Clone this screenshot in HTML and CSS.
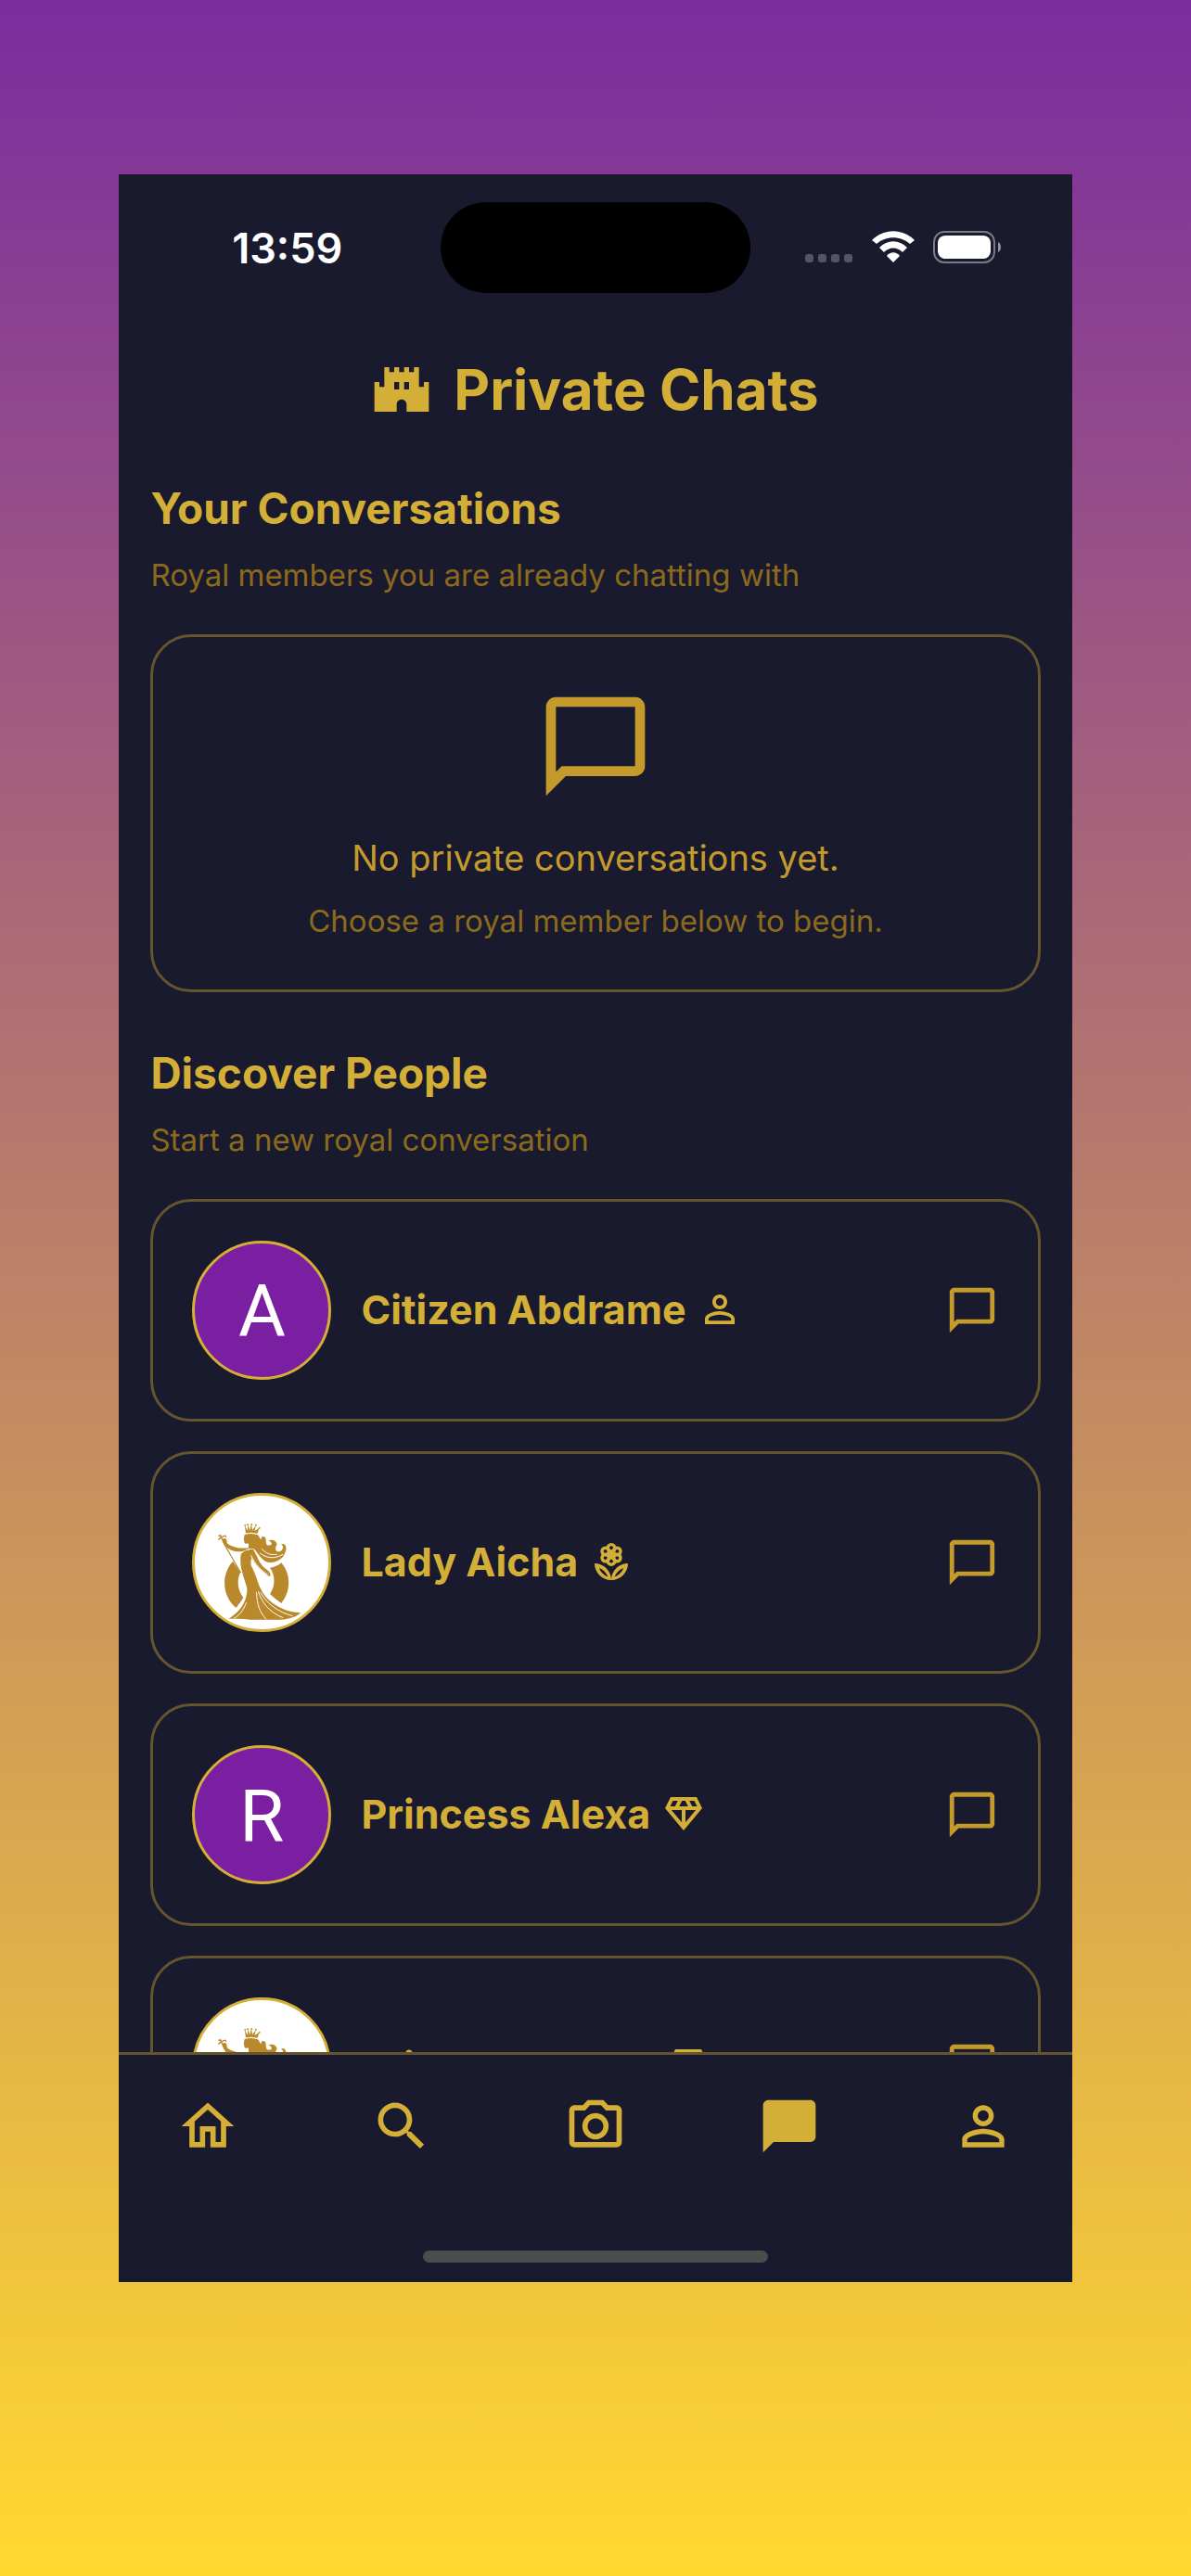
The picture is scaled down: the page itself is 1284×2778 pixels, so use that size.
FILE: index.html
```html
<!DOCTYPE html>
<html lang="en">
  <head>
    <meta charset="UTF-8" />
    <meta name="viewport" content="width=device-width, initial-scale=1.0" />
    <title>Private Chats</title>
    <link rel="stylesheet" href="styles.css">
  </head>
  <body>
    <!-- shared icons -->
    <svg class="sprite" aria-hidden="true">
      <symbol id="chat" viewBox="0 0 24 24">
        <path d="M20 2H4c-1.100 0-2 .9-2 2v18l4-4h14c1.100 0 2-.9 2-2V4c0-1.100-.9-2-2-2zm0 14H5.170L4 17.170V4h16v12z" />
      </symbol>
      <symbol id="person" viewBox="0 0 24 24">
        <path d="M12 5.900a2.100 2.100 0 1 1 0 4.200 2.100 2.100 0 0 1 0-4.200m0 9c2.970 0 6.100 1.460 6.100 2.100v1.100H5.900V17c0-.64 3.130-2.100 6.100-2.100M12 4C9.790 4 8 5.790 8 8s1.790 4 4 4 4-1.790 4-4-1.790-4-4-4zm0 9c-2.670 0-8 1.340-8 4v3h16v-3c0-2.660-5.330-4-8-4z" />
      </symbol>
      <symbol id="gem" viewBox="0 0 24 24">
        <path d="M19 3H5L2 9l10 12L22 9l-3-6zM9.620 8l1.500-3h1.760l1.500 3H9.620zM11 10v6.680L5.440 10H11zm2 0h5.560L13 16.680V10zm6.260-2h-2.650l-1.500-3h2.650l1.500 3zM6.240 5h2.650l-1.500 3H4.740l1.500-3z" />
      </symbol>
      <symbol id="queen" viewBox="52 62 446 446">
        <g fill="#ba892b">
          <path d="M179 281C140 325 141 396 190 437C199 424 208 414 214 402C194 378 192 342 204 318Z" />
          <path d="M341 286C374 325 374 380 341 421C328 411 315 401 303 390C321 364 322 330 303 303C317 300 331 295 341 286Z" />
          <path d="M206 258C212 247 232 239 249 242C248 262 236 276 240 295C262 335 262 365 287 397C315 430 360 452 405 452C396 464 370 474 340 476H235C222 473 200 474 165 472C195 455 225 425 227 375C222 345 198 305 206 258Z" />
          <path d="M246 242C258 254 262 280 280 299C290 309 303 312 305 328C301 334 294 328 288 322C270 311 250 288 240 266Z" />
          <path d="M236 237C205 238 178 237 160 221C158 213 161 207 153 205C144 203 141 212 147 220C157 240 184 254 214 247Z" />
          <path d="M220 190C216 195 218 200 215 208C218 211 216 220 222 222C228 222 230 219 232 225L231 238L250 240C260 250 270 270 290 283C320 290 352 275 357 240C358 228 350 219 340 225C350 228 348 243 336 248C322 252 318 236 326 225C326 212 308 205 298 213C312 216 312 229 298 228C286 226 292 208 287 201C281 196 273 199 274 206C270 210 268 198 262 191C250 186 232 184 220 190Z" />
          <path d="M222 187L219 162L229 180L229 157L236 178L241 156L244 178L256 160L252 180L269 168L260 189C246 184 234 184 222 187Z" />
        </g>
        <g fill="#ba892b">
          <circle cx="220" cy="161" r="3" /><circle cx="229" cy="159" r="3" /><circle cx="242" cy="158" r="3" />
          <circle cx="256" cy="160" r="3" /><circle cx="268" cy="170" r="3" />
        </g>
        <g fill="none" stroke="#ba892b" stroke-width="4" stroke-linecap="round">
          <path d="M137 194L152 226L205 318M132 208C136 202 142 202 146 198C152 196 155 194 156 199M132 196H140" />
        </g>
        <g fill="none" stroke="#fff" stroke-width="3" stroke-linecap="round">
          <path d="M221 190C234 186 248 187 263 192M258 386C260 420 266 450 290 474M264 382C276 420 300 450 345 469M272 386C294 424 330 450 377 463M224 420C214 446 200 462 184 471M240 262C256 296 276 312 296 326M270 254C292 272 320 274 346 258M276 240C290 255 306 262 326 258M172 254L210 320" />
        </g>
      </symbol>
    </svg>

    <div class="phone">
      <header class="status">
        <span class="time">13:59</span>
        <div class="island"></div>
        <div class="signals">
          <svg class="dots" viewBox="0 0 52 34">
            <rect x="0" y="25" width="9" height="9" rx="3" />
            <rect x="14" y="25" width="9" height="9" rx="3" />
            <rect x="28" y="25" width="9" height="9" rx="3" />
            <rect x="42" y="25" width="9" height="9" rx="3" />
          </svg>
          <svg class="wifi" viewBox="0 0 46 34">
            <path d="M0 10C13-3 33-3 46 10L41 14C31 5 15 5 5 14Z" />
            <path d="M8 18C17 9 29 9 38 18L33 23C27 17 19 17 13 23Z" />
            <path d="M16 27C20 22 26 22 30 27L23 34Z" />
          </svg>
          <svg class="battery" viewBox="0 0 74 36">
            <rect class="shell" x="1" y="1" width="65" height="33" rx="11" />
            <rect x="5" y="5" width="57" height="25" rx="8" />
            <path class="tip" d="M70 12C74 13 74 22 70 23Z" />
          </svg>
        </div>
      </header>

      <h1 class="title">
        <svg class="castle" viewBox="0 0 24 24">
          <path d="M21 9v2h-2V3h-2v2h-2V3h-2v2h-2V3H9v2H7V3H5v8H3V9H1v12h9v-3c0-1.100.9-2 2-2s2 .9 2 2v3h9V9h-2zM11 12H9V9h2v3zm4 0h-2V9h2v3z" />
        </svg>
        Private Chats
      </h1>

      <main class="content">
        <section>
          <h2>Your Conversations</h2>
          <p class="hint">Royal members you are already chatting with</p>
          <div class="card empty">
            <svg class="empty-icon"><use href="#chat" /></svg>
            <p class="empty-text">No private conversations yet.</p>
            <p class="hint">Choose a royal member below to begin.</p>
          </div>
        </section>

        <section>
          <h2>Discover People</h2>
          <p class="hint">Start a new royal conversation</p>
          <ul class="people">
            <li class="card person">
              <span class="avatar">A</span>
              <h3>Citizen Abdrame <svg class="badge"><use href="#person" /></svg></h3>
              <button class="chat-btn" aria-label="Chat with Abdrame"><svg><use href="#chat" /></svg></button>
            </li>
            <li class="card person">
              <span class="avatar photo"><svg><use href="#queen" /></svg></span>
              <h3>Lady Aicha
                <svg class="badge" viewBox="0 0 24 24">
                  <!-- petals, then the two leaves -->
                  <g fill="none" stroke="currentColor" stroke-width="1.700">
                    <circle cx="12" cy="4.700" r="1.900" /><circle cx="12" cy="11.700" r="1.900" />
                    <circle cx="15.100" cy="6.500" r="1.900" /><circle cx="15.100" cy="10" r="1.900" />
                    <circle cx="8.900" cy="6.500" r="1.900" /><circle cx="8.900" cy="10" r="1.900" />
                  </g>
                  <circle cx="12" cy="8.250" r="2.600" />
                  <path d="M3 13c0 4.970 4.030 9 9 9 0-4.970-4.030-9-9-9zm2.440 2.440c2.220.8 3.990 2.560 4.780 4.780-2.220-.8-3.980-2.570-4.780-4.780zM12 22c4.970 0 9-4.030 9-9-4.970 0-9 4.030-9 9zm1.780-1.780c.8-2.220 2.560-3.990 4.780-4.780-.8 2.210-2.560 3.980-4.780 4.780z" />
                </svg>
              </h3>
              <button class="chat-btn" aria-label="Chat with Aicha"><svg><use href="#chat" /></svg></button>
            </li>
            <li class="card person">
              <span class="avatar">R</span>
              <h3>Princess Alexa <svg class="badge"><use href="#gem" /></svg></h3>
              <button class="chat-btn" aria-label="Chat with Alexa"><svg><use href="#chat" /></svg></button>
            </li>
            <li class="card person">
              <span class="avatar photo"><svg><use href="#queen" /></svg></span>
              <h3>Princess Angel <svg class="badge"><use href="#gem" /></svg></h3>
              <button class="chat-btn" aria-label="Chat with Angel"><svg><use href="#chat" /></svg></button>
            </li>
          </ul>
        </section>
      </main>

      <footer class="bottom">
        <nav>
          <a href="#home" aria-label="Home">
            <svg viewBox="0 0 24 24"><path d="M12 5.690l5 4.500V18h-2v-6H9v6H7v-7.810l5-4.500M12 3L2 12h3v8h6v-6h2v6h6v-8h3L12 3z" /></svg>
          </a>
          <a href="#search" aria-label="Search">
            <svg viewBox="0 0 24 24"><path d="M15.500 14h-.79l-.28-.27A6.470 6.470 0 0 0 16 9.500 6.500 6.500 0 1 0 9.500 16c1.610 0 3.090-.59 4.230-1.570l.27.28v.79l5 4.990L20.490 19l-4.990-5zm-6 0C7.010 14 5 11.990 5 9.500S7.010 5 9.500 5 14 7.010 14 9.500 11.990 14 9.500 14z" /></svg>
          </a>
          <a href="#camera" aria-label="Camera">
            <svg viewBox="0 0 24 24"><path d="M14.120 4l1.830 2H20v12H4V6h4.050l1.830-2h4.240M15 2H9L7.170 4H4c-1.100 0-2 .9-2 2v12c0 1.100.9 2 2 2h16c1.100 0 2-.9 2-2V6c0-1.100-.9-2-2-2h-3.170L15 2zm-3 7c1.650 0 3 1.350 3 3s-1.350 3-3 3-3-1.350-3-3 1.350-3 3-3m0-2c-2.760 0-5 2.240-5 5s2.240 5 5 5 5-2.240 5-5-2.240-5-5-5z" /></svg>
          </a>
          <a href="#chats" aria-label="Chats">
            <svg viewBox="0 0 24 24"><path d="M20 2H4c-1.100 0-2 .9-2 2v18l4-4h14c1.100 0 2-.9 2-2V4c0-1.100-.9-2-2-2z" /></svg>
          </a>
          <a href="#profile" aria-label="Profile">
            <svg><use href="#person" /></svg>
          </a>
        </nav>
        <div class="home-bar"></div>
      </footer>
    </div>
  </body>
</html>
```

FILE: styles.css
```css
* {
  box-sizing: border-box;
}
body {
  margin: 0;
  height: 100vh;
  padding: 188px 10% 317px;
  background: linear-gradient(#7b2c9f, #ffd92f);
  font-family: Inter, "Liberation Sans", sans-serif;
  color: #d4af37;
}
h1,
h2,
h3,
p,
ul {
  margin: 0;
  padding: 0;
}
svg {
  display: block;
  fill: currentColor;
}
.sprite {
  display: none;
}
.phone {
  height: 100%;
  display: flex;
  flex-direction: column;
  background: #1a1a2e;
}

/* status bar */
.status {
  display: grid;
  grid-template-columns: 1fr 334px 1fr;
  align-items: center;
  padding-top: 30px;
  color: white;
}
.time {
  padding-left: 16px;
  text-align: center;
  font-size: 45px;
  font-weight: 600;
}
.island {
  height: 98px;
  border-radius: 49px;
  background: black;
}
.signals {
  display: flex;
  justify-content: center;
  gap: 20px;
  padding-right: 16px;
}
.dots {
  width: 52px;
  height: 34px;
  opacity: 0.25;
}
.wifi {
  width: 46px;
  height: 34px;
}
.battery {
  width: 74px;
  height: 36px;
}
.shell {
  fill: none;
  stroke: #7b7b86;
  stroke-width: 2;
}
.tip {
  fill: #9292a0;
}

.title {
  display: flex;
  align-items: center;
  justify-content: center;
  gap: 24px;
  padding: 68px 0 62px;
  font-size: 60px;
  line-height: 72px;
  font-weight: 700;
}
.castle {
  width: 64px;
  height: 64px;
}

.content {
  flex: 1;
  min-height: 0;
  overflow: hidden;
  padding: 0 34px;
  display: flex;
  flex-direction: column;
  gap: 57px;
}
h2 {
  font-size: 46px;
  line-height: 60px;
  font-weight: 700;
}
.hint {
  font-size: 33px;
  line-height: 40px;
  font-weight: 400;
  color: #8b6a1d;
}
section > .hint {
  margin: 22px 0 44px;
}
.card {
  border: 3px solid #65552f;
  border-radius: 44px;
}
.empty {
  display: flex;
  flex-direction: column;
  align-items: center;
  padding: 54px 40px;
}
.empty-icon {
  width: 128px;
  height: 128px;
  color: #c49a2c;
}
.empty-text {
  margin: 32px 0 24px;
  font-size: 38px;
  line-height: 48px;
  color: #c49a2c;
}
.people {
  list-style: none;
  display: flex;
  flex-direction: column;
  gap: 32px;
}
.person {
  display: flex;
  align-items: center;
  gap: 32px;
  padding: 42px;
}
.avatar {
  width: 150px;
  height: 150px;
  flex: none;
  border: 3px solid #d4af37;
  border-radius: 50%;
  overflow: hidden;
  background: #7b1fa2;
  color: white;
  font: 78px/148px Roboto, sans-serif;
  text-align: center;
}
.photo {
  background: white;
}
.photo svg {
  width: 100%;
  height: 100%;
}
h3 {
  flex: 1;
  display: flex;
  align-items: center;
  gap: 12px;
  font-size: 43px;
  line-height: 48px;
  font-weight: 700;
  padding-bottom: 2px;
}
.badge {
  width: 48px;
  height: 48px;
}
.chat-btn {
  padding: 0;
  border: 0;
  background: none;
  color: #c49a2c;
}
.chat-btn svg {
  width: 58px;
  height: 58px;
}

/* bottom navigation */
.bottom {
  height: 248px;
  display: flex;
  flex-direction: column;
  justify-content: space-between;
  padding: 43px 62px 21px;
  border-top: 3px solid #65552f;
}
nav {
  display: flex;
  justify-content: space-between;
}
nav a {
  color: #d4af37;
}
nav svg {
  width: 68px;
  height: 68px;
}
.home-bar {
  width: 372px;
  height: 13px;
  margin: 0 auto;
  border-radius: 7px;
  background: #4c4c4c;
}
```
